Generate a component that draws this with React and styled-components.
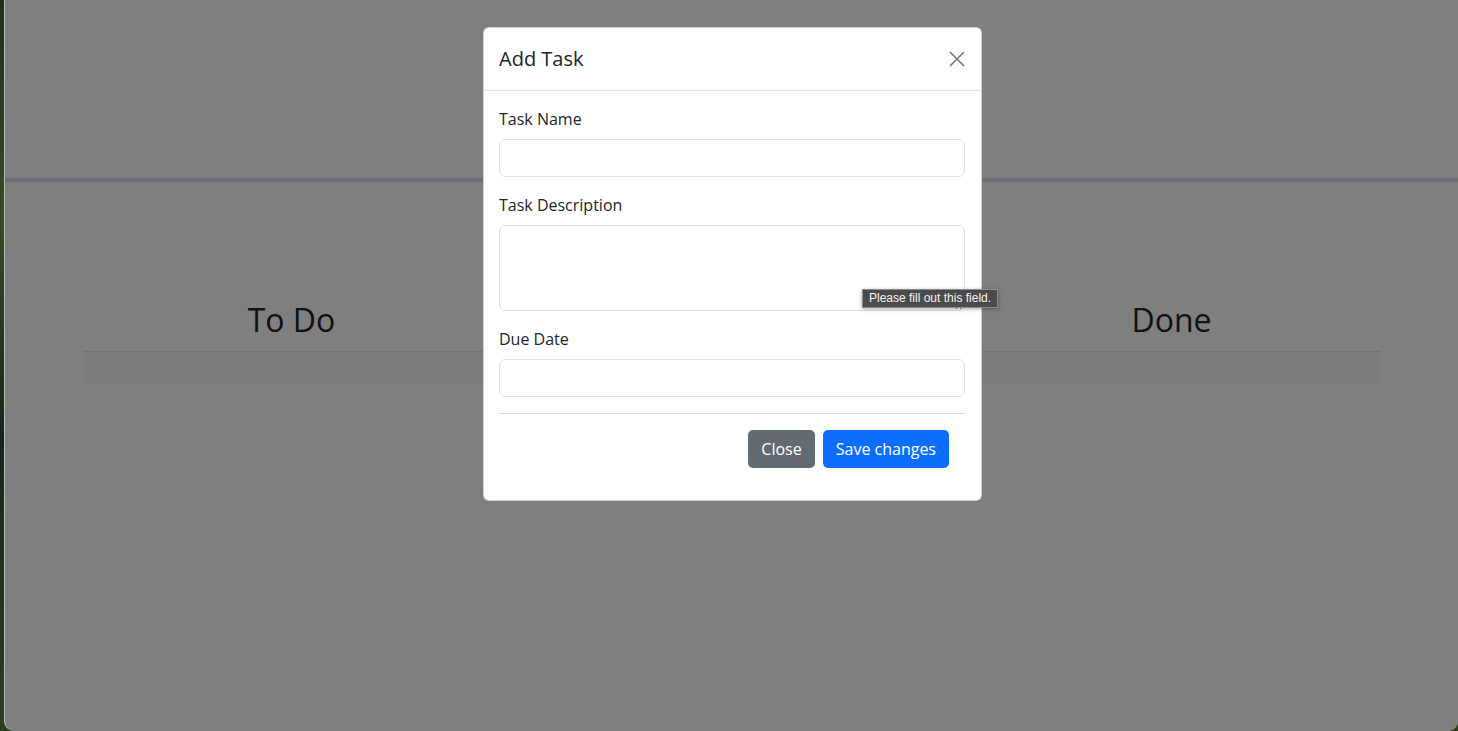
import styled, { createGlobalStyle } from "styled-components";

const GlobalStyle = createGlobalStyle`
  * { box-sizing: border-box; }
  html, body { margin: 0; padding: 0; height: 731px; overflow: hidden; }
  body {
    font-family: "Open Sans", "Noto Sans", sans-serif;
    background: linear-gradient(180deg, #1f2d1b 0%, #3a4a26 30%, #18241a 60%, #2e3d22 100%);
  }
`;

const Window = styled.div`
  position: relative;
  margin-left: 4px;
  height: 731px;
  background: #ffffff;
  border-left: 1px solid #b8b8b8;
  border-bottom-left-radius: 10px;
  border-bottom-right-radius: 10px;
  overflow: hidden;
  color: #212529;
`;

const Header = styled.header`
  height: 182px;
  border-bottom: 4px solid #d7e2ec;
`;

const Container = styled.main`
  width: 1320px;
  margin: 0 auto;
  padding-top: 119px;
  display: grid;
  grid-template-columns: repeat(3, 1fr);
`;

const Column = styled.section`
  padding: 0 12px;
  display: flex;
  flex-direction: column;
`;

const ColumnTitle = styled.h2`
  margin: 0 0 12px;
  font-size: 32px;
  font-weight: 400;
  line-height: 1.2;
  text-align: center;
`;

const TaskList = styled.div`
  border-top: 1px solid #e2e4e6;
  background: #f9fbf6;
  height: 33px;
`;

const Backdrop = styled.div`
  position: absolute;
  inset: 0;
  background: rgba(0, 0, 0, 0.5);
  display: flex;
  justify-content: center;
  align-items: flex-start;
  padding: 27px 0 0 2px;
`;

const Modal = styled.div`
  position: relative;
  width: 499px;
  background: #fff;
  border: 1px solid rgba(0, 0, 0, 0.175);
  border-radius: 6px;
`;

const ModalHeader = styled.div`
  display: flex;
  align-items: center;
  justify-content: space-between;
  padding: 16px 16px 16px 15px;
  border-bottom: 1px solid #dee2e6;
`;

const ModalTitle = styled.h5`
  margin: 0;
  font-size: 20px;
  font-weight: 400;
  line-height: 30px;
`;

const CloseX = styled.button`
  width: 24px;
  height: 24px;
  padding: 0;
  margin-right: -4px;
  border: 0;
  background: transparent;
  display: flex;
  align-items: center;
  justify-content: center;
  opacity: 0.55;
  cursor: pointer;
`;

const ModalBody = styled.form`
  padding: 16px 16px 16px 15px;
`;

const Field = styled.div`
  margin-bottom: 16px;
`;

const Label = styled.label`
  display: block;
  margin-bottom: 8px;
  font-size: 16px;
  line-height: 24px;
`;

const Input = styled.input`
  display: block;
  width: 100%;
  height: 38px;
  padding: 6px 12px;
  font: inherit;
  border: 1px solid #dee2e6;
  border-radius: 6px;
  outline: none;
`;

const TextArea = styled.textarea`
  display: block;
  width: 100%;
  height: 86px;
  padding: 6px 12px;
  font: inherit;
  border: 1px solid #dee2e6;
  border-radius: 6px;
  outline: none;
  resize: vertical;
`;

const Divider = styled.hr`
  margin: 0;
  border: 0;
  border-top: 1px solid #dadcde;
`;

const Footer = styled.div`
  display: flex;
  justify-content: flex-end;
  gap: 8px;
  padding: 16px;
`;

const Button = styled.button`
  height: 38px;
  padding: 0 13px;
  font: inherit;
  font-size: 16px;
  color: #fff;
  border: 0;
  border-radius: 5px;
  background: ${(p) => (p.$variant === "primary" ? "#0d6efd" : "#626b71")};
  cursor: pointer;
`;

const Tooltip = styled.div`
  position: absolute;
  left: 378px;
  top: 261px;
  padding: 2px 6px 2px;
  background: #4b4b4b;
  border: 1px solid #8c8c8c;
  color: #f4f4f4;
  font-family: "Liberation Sans", Arial, sans-serif;
  font-size: 12px;
  line-height: 13px;
  white-space: nowrap;
  box-shadow: 0 1px 4px rgba(0, 0, 0, 0.35);
`;

const columns = ["To Do", "In Progress", "Done"];

export default function App() {
  return (
    <>
      <GlobalStyle />
      <Window>
        <Header />
        <Container>
          {columns.map((c) => (
            <Column key={c}>
              <ColumnTitle>{c}</ColumnTitle>
              <TaskList />
            </Column>
          ))}
        </Container>
        <Backdrop>
          <Modal>
            <ModalHeader>
              <ModalTitle>Add Task</ModalTitle>
              <CloseX type="button" aria-label="Close">
                <svg width="16" height="16" viewBox="0 0 16 16">
                  <path d="M1 1L15 15M15 1L1 15" stroke="#000" strokeWidth="1.5" fill="none" />
                </svg>
              </CloseX>
            </ModalHeader>
            <ModalBody>
              <Field>
                <Label>Task Name</Label>
                <Input type="text" />
              </Field>
              <Field>
                <Label>Task Description</Label>
                <TextArea />
              </Field>
              <Field>
                <Label>Due Date</Label>
                <Input type="text" />
              </Field>
              <Divider />
              <Footer>
                <Button type="button">Close</Button>
                <Button type="button" $variant="primary">Save changes</Button>
              </Footer>
            </ModalBody>
            <Tooltip>Please fill out this field.</Tooltip>
          </Modal>
        </Backdrop>
      </Window>
    </>
  );
}
